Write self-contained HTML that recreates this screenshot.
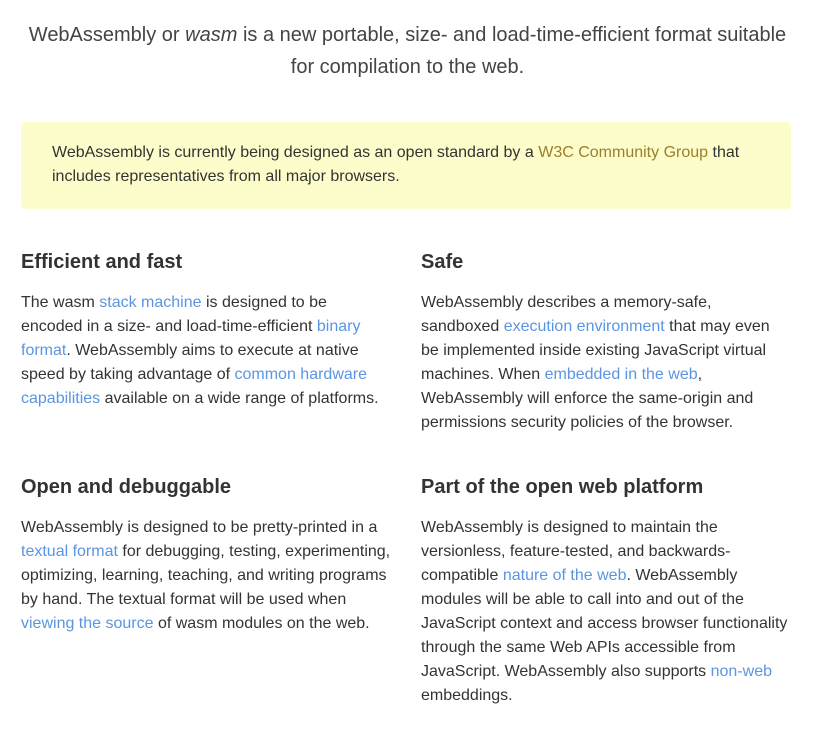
<!DOCTYPE html>
<html><head><meta charset="utf-8"><style>
body{margin:0;background:#fff;font-family:"Liberation Sans",Helvetica,Arial,sans-serif;color:#333;width:815px;}
.intro{position:absolute;left:0;top:19px;width:815px;text-align:center;font-size:20px;line-height:32px;color:#444;}
.box{position:absolute;left:21px;top:122px;width:708px;height:48px;padding:19px 31px 20px 31px;background:#fdfdcb;border-radius:4px;font-size:16px;line-height:24px;white-space:nowrap}
.box a{color:#9b7f2a;text-decoration:none}
.col{position:absolute;width:380px;font-size:16px;line-height:24px;white-space:nowrap}
.col h2{margin:0 0 17px;font-size:20px;line-height:24px;font-weight:bold;color:#333}
.col p{margin:0}
a{color:#5b95e1;text-decoration:none}
</style></head><body>
<div class="intro">WebAssembly or <i>wasm</i> is a new portable, size- and load-time-efficient format suitable<br>for compilation to the web.</div>
<div class="box">WebAssembly is currently being designed as an open standard by a <a>W3C Community Group</a> that<br>includes representatives from all major browsers.</div>
<div class="col" style="left:21px;top:250px"><h2>Efficient and fast</h2><p>The wasm <a>stack machine</a> is designed to be<br>encoded in a size- and load-time-efficient <a>binary<br>format</a>. WebAssembly aims to execute at native<br>speed by taking advantage of <a>common hardware<br>capabilities</a> available on a wide range of platforms.</p></div>
<div class="col" style="left:421px;top:250px"><h2>Safe</h2><p>WebAssembly describes a memory-safe,<br>sandboxed <a>execution environment</a> that may even<br>be implemented inside existing JavaScript virtual<br>machines. When <a>embedded in the web</a>,<br>WebAssembly will enforce the same-origin and<br>permissions security policies of the browser.</p></div>
<div class="col" style="left:21px;top:475px"><h2>Open and debuggable</h2><p>WebAssembly is designed to be pretty-printed in a<br><a>textual format</a> for debugging, testing, experimenting,<br>optimizing, learning, teaching, and writing programs<br>by hand. The textual format will be used when<br><a>viewing the source</a> of wasm modules on the web.</p></div>
<div class="col" style="left:421px;top:475px"><h2>Part of the open web platform</h2><p>WebAssembly is designed to maintain the<br>versionless, feature-tested, and backwards-<br>compatible <a>nature of the web</a>. WebAssembly<br>modules will be able to call into and out of the<br>JavaScript context and access browser functionality<br>through the same Web APIs accessible from<br>JavaScript. WebAssembly also supports <a>non-web</a><br>embeddings.</p></div>
</body></html>
